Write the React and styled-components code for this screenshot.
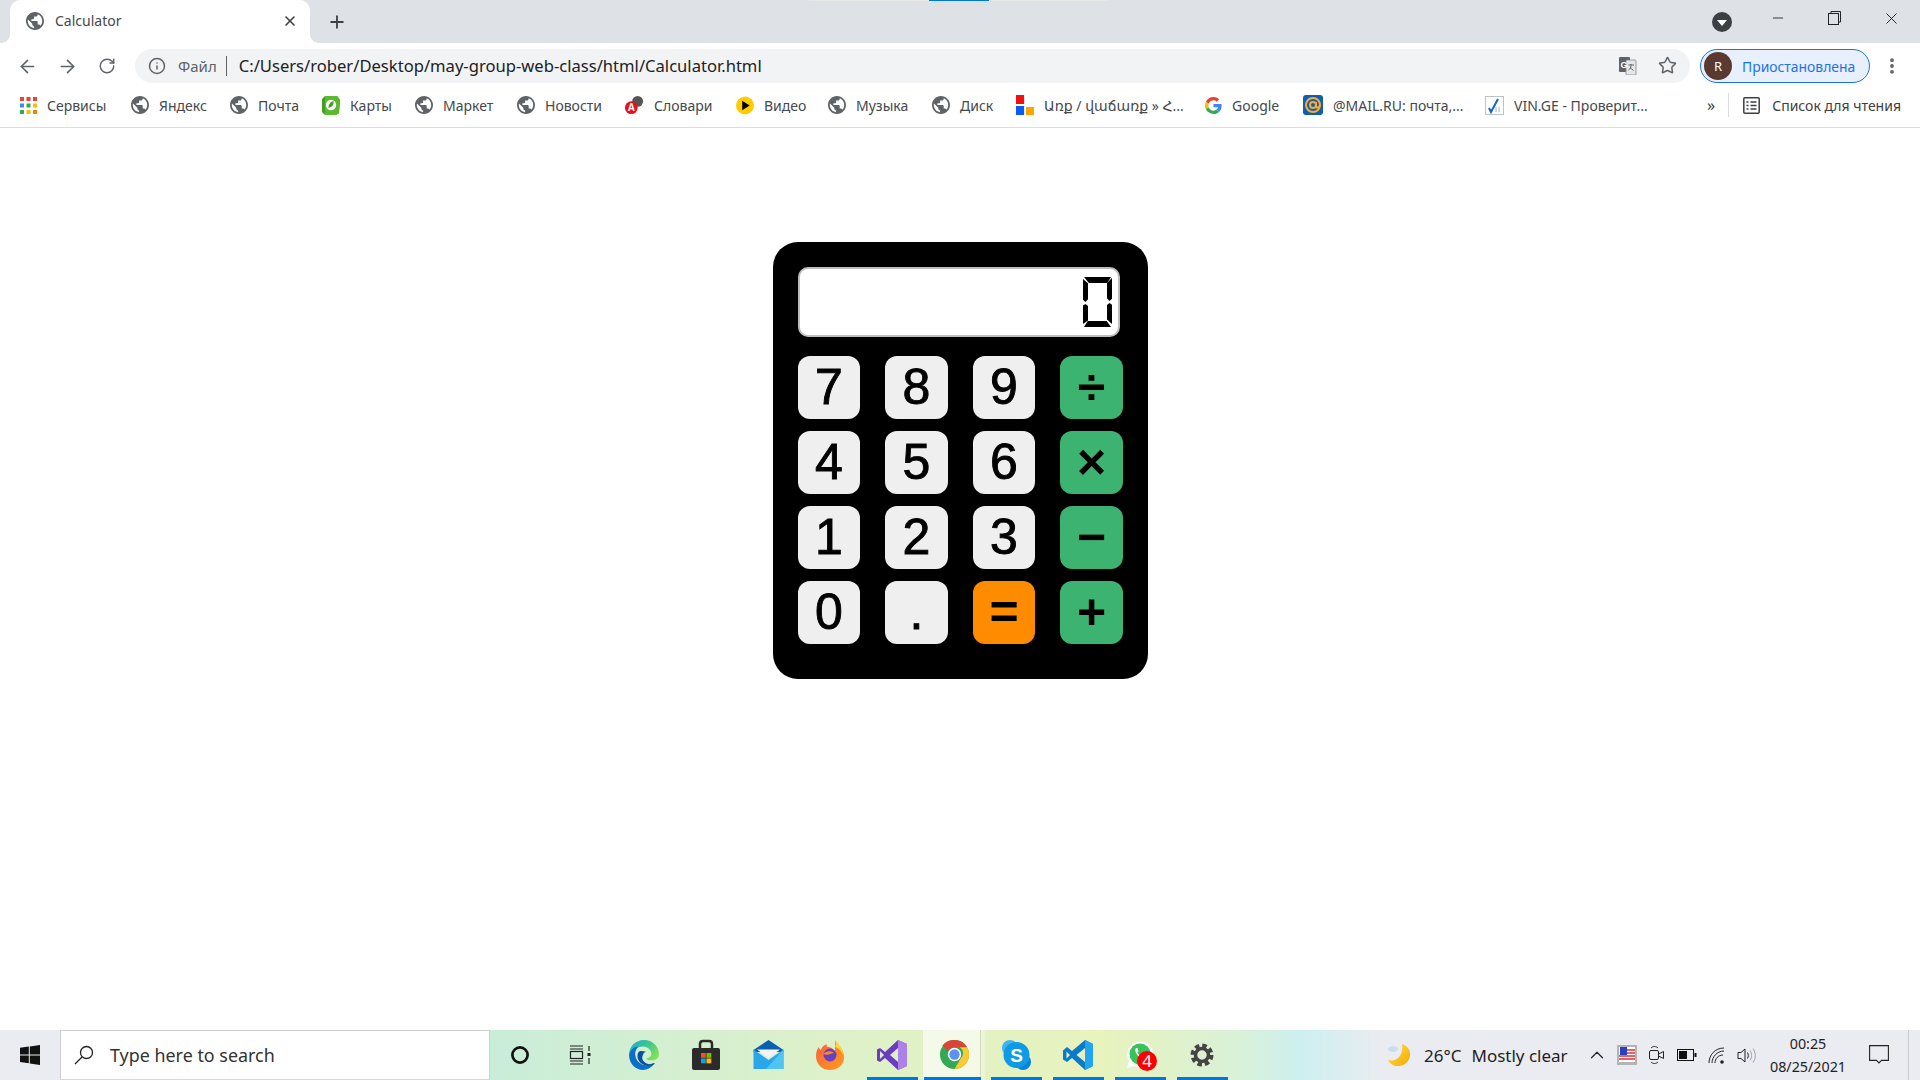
import React from "react";
import styled, { createGlobalStyle } from "styled-components";
import { ArrowLeft, ArrowRight, RotateCw, Info, Star, X, Plus, Minus, EllipsisVertical, ChevronUp } from "lucide-react";

const GlobalStyle = createGlobalStyle`
  html, body { margin: 0; height: 100%; background: #fff; overflow: hidden; }
  #root { height: 100%; }
  * { box-sizing: border-box; }
`;

const uiFont = `"Noto Sans", "DejaVu Sans", sans-serif`;

const Page = styled.div`
  height: 100vh;
  display: flex;
  flex-direction: column;
  font-family: ${uiFont};
`;

/* ---------- browser chrome ---------- */
const TabStrip = styled.div`
  position: relative;
  height: 43px;
  flex: none;
  background: #dee1e6;
  display: flex;
  padding-left: 10px;
`;
const TopIndicator = styled.div`
  position: absolute;
  top: 0;
  left: 809px;
  width: 300px;
  height: 1px;
  background: linear-gradient(90deg, #e6e6e6 0, #e6e6e6 120px, #0078d7 120px, #0078d7 180px, #e6e6e6 180px);
`;
const Tab = styled.div`
  position: relative;
  width: 300px;
  height: 43px;
  background: #fff;
  border-radius: 10px 10px 0 0;
  display: flex;
  align-items: center;
  padding: 0 0 1px 16px;
  &::before, &::after {
    content: "";
    position: absolute;
    bottom: 0;
    width: 10px;
    height: 10px;
  }
  &::before { left: -10px; background: radial-gradient(circle at 0 0, #dee1e6 10px, #fff 10.5px); }
  &::after { right: -10px; background: radial-gradient(circle at 100% 0, #dee1e6 10px, #fff 10.5px); }
`;
const TabTitle = styled.span`
  margin: -2px 0 0 11px;
  font-size: 14px;
  color: #45484d;
  flex: 1;
`;
const TabClose = styled.span`
  display: flex;
  margin-right: 12px;
  color: #3c4043;
`;
const NewTab = styled.span`
  display: flex;
  margin-left: 17px;
  align-self: center;
  color: #3c4043;
`;
const WindowControls = styled.div`
  margin-left: auto;
  display: flex;
  align-items: flex-start;
`;
const TabSearch = styled.div`
  width: 20px;
  height: 20px;
  margin: 12px 17px 0 0;
  border-radius: 50%;
  background: #3c4043;
  display: flex;
  align-items: center;
  justify-content: center;
  &::before {
    content: "";
    border-left: 5px solid transparent;
    border-right: 5px solid transparent;
    border-top: 6px solid #fff;
    margin-top: 2px;
  }
`;
const WinButton = styled.div`
  width: 57px;
  height: 36px;
  display: flex;
  align-items: center;
  justify-content: center;
  color: #222;
`;

const Toolbar = styled.div`
  height: 41px;
  flex: none;
  background: #fff;
  display: flex;
  align-items: flex-start;
  padding: 6px 0 0 7px;
`;
const NavButton = styled.div`
  width: 40px;
  height: 34px;
  display: flex;
  align-items: center;
  justify-content: center;
  color: #5f6368;
`;
const AddressBar = styled.div`
  margin-left: 8px;
  width: 1555px;
  height: 34px;
  border-radius: 17px;
  background: #f1f3f4;
  display: flex;
  align-items: center;
  padding: 0 0 1px 13px;
`;
const SiteLabel = styled.span`
  margin-left: 12px;
  font-size: 15px;
  color: #5f6368;
`;
const Divider = styled.span`
  width: 1px;
  height: 20px;
  background: #5f6368;
  margin: 0 12px 0 9px;
`;
const Url = styled.span`
  font-size: 16.6px;
  color: #202124;
  flex: 1;
`;
const AddressIcon = styled.span`
  display: flex;
  margin-right: ${(p) => p.$mr}px;
  color: #5f6368;
`;
const ProfilePill = styled.div`
  margin-left: 10px;
  width: 170px;
  height: 34px;
  border-radius: 17px;
  border: 1.5px solid #1a73e8;
  background: #e8f0fe;
  display: flex;
  align-items: center;
  padding-left: 3px;
`;
const Avatar = styled.span`
  width: 28px;
  height: 28px;
  border-radius: 50%;
  background: #5a3a30;
  color: #fff;
  font-size: 13px;
  display: flex;
  align-items: center;
  justify-content: center;
`;
const ProfileName = styled.span`
  margin-left: 10px;
  font-size: 13.9px;
  color: #1a73e8;
`;
const Kebab = styled.span`
  display: flex;
  margin: 7px 0 0 12px;
  color: #5f6368;
`;

const BookmarksBar = styled.div`
  height: 44px;
  flex: none;
  background: #fff;
  border-bottom: 1px solid #dadce0;
  display: flex;
  align-items: center;
  padding: 0 0 1px 20px;
`;
const Bookmark = styled.div`
  width: ${(p) => p.$w}px;
  display: flex;
  align-items: center;
  gap: 10px;
  font-size: 14px;
  color: #45484d;
  white-space: nowrap;
  flex: none;
`;
const BookmarksEnd = styled.div`
  margin-left: auto;
  display: flex;
  align-items: center;
  padding-right: 19px;
  font-size: 14px;
  color: #3c4043;
`;
const More = styled.span`
  font-size: 16px;
  margin-right: 13px;
`;
const BarSeparator = styled.span`
  width: 1px;
  height: 24px;
  background: #dadce0;
  margin-right: 14px;
`;
const ListLabel = styled.span`
  margin-left: 12px;
`;

/* ---------- calculator ---------- */
const Main = styled.main`
  flex: 1;
  background: #fff;
  display: flex;
  justify-content: center;
  align-items: flex-start;
  padding: 114px 0 0 1px;
`;
const Calculator = styled.div`
  width: 375px;
  height: 437px;
  background: #000;
  border-radius: 25px;
  padding: 25px;
`;
const Display = styled.div`
  width: 322px;
  height: 70px;
  background: #fff;
  border: 2px solid #bdbdbd;
  border-radius: 10px;
  display: flex;
  justify-content: flex-end;
  padding: 8px 6px 0 0;
  margin-bottom: 19px;
`;
const Readout = styled.div`
  position: relative;
  width: 29px;
  height: 50px;
  color: transparent;
  font: 44px/50px "Liberation Mono", monospace;
  overflow: hidden;
`;
const Segment = styled.i`
  position: absolute;
  left: ${(p) => p.$x}px;
  top: ${(p) => p.$y}px;
  width: ${(p) => p.$w}px;
  height: ${(p) => p.$h}px;
  background: #000;
  clip-path: ${(p) => p.$clip};
`;
const Keys = styled.div`
  display: grid;
  grid-template-columns: 62px 63px 62px 63px;
  grid-auto-rows: 63px;
  column-gap: 25px;
  row-gap: 12px;
`;
const keyColors = { digit: "#efefef", op: "#3cb371", equal: "#ff8c00" };
const Key = styled.button`
  border: 0;
  padding: 0 0 2px;
  border-radius: 12px;
  background: ${(p) => keyColors[p.$kind]};
  color: #000;
  font-family: "Liberation Sans", Arial, sans-serif;
  font-size: 50px;
  line-height: 1;
  font-weight: ${(p) => (p.$kind === "digit" ? 400 : 700)};
  -webkit-text-stroke: ${(p) => (p.$kind === "digit" ? "0.9px #000" : "0")};
  display: flex;
  align-items: center;
  justify-content: center;
`;

/* ---------- taskbar ---------- */
const Taskbar = styled.footer`
  height: 50px;
  flex: none;
  display: flex;
  background: linear-gradient(90deg, #ebecf1 0, #ebecf1 489px, #c9edd9 489px, #dcf0cb 800px, #e8f3bd 1100px, #d8f1d8 1240px, #cdeff0 1300px, #ebecf1 1385px);
`;
const StartButton = styled.div`
  width: 60px;
  display: flex;
  align-items: center;
  justify-content: center;
`;
const SearchBox = styled.div`
  width: 430px;
  background: #fff;
  border: 1px solid #cfcfcf;
  border-bottom-color: #d8d8d8;
  display: flex;
  align-items: center;
  padding-left: 13px;
  gap: 16px;
  font-size: 17.9px;
  color: #333;
`;
const ShellButton = styled.div`
  width: 60px;
  display: flex;
  align-items: center;
  justify-content: center;
`;
const AppStrip = styled.div`
  display: flex;
  margin-left: 3px;
`;
const AppButton = styled.div`
  position: relative;
  width: 62px;
  display: flex;
  align-items: center;
  justify-content: center;
  padding-bottom: 1px;
  background: ${(p) =>
    p.$active
      ? "linear-gradient(90deg, rgba(255,255,255,.62) 0, rgba(255,255,255,.62) 57px, #cfdcbc 57px, #cfdcbc 58px, rgba(255,255,255,.35) 58px)"
      : "transparent"};
  &::after {
    content: "";
    display: ${(p) => (p.$running ? "block" : "none")};
    position: absolute;
    bottom: 0;
    left: ${(p) => (p.$active ? 1 : 6)}px;
    right: ${(p) => (p.$active ? 4 : 5)}px;
    height: 3px;
    background: #0078d7;
  }
`;
const Badge = styled.span`
  position: absolute;
  left: 28px;
  top: 21px;
  width: 20px;
  height: 20px;
  border-radius: 50%;
  background: #f00;
  color: #fff;
  font-size: 17px;
  line-height: 20px;
  text-align: center;
`;
const Tray = styled.div`
  margin-left: auto;
  display: flex;
  align-items: stretch;
  color: #1f1f1f;
`;
const Weather = styled.div`
  width: 195px;
  display: flex;
  align-items: center;
  font-size: 17px;
`;
const Temp = styled.span`
  margin: 0 10px 0 13px;
`;
const TrayCell = styled.div`
  width: 30px;
  display: flex;
  align-items: center;
  justify-content: center;
  color: #222;
`;
const Clock = styled.div`
  width: 90px;
  padding-left: 2px;
  display: flex;
  flex-direction: column;
  align-items: center;
  justify-content: center;
  gap: 5px;
  font-size: 14.3px;
  line-height: 18px;
  color: #222;
`;
const NotifyCell = styled.div`
  width: 54px;
  display: flex;
  align-items: center;
  justify-content: center;
`;
const ShowDesktop = styled.div`
  width: 14px;
  position: relative;
  &::before {
    content: "";
    position: absolute;
    left: 2px;
    top: 0;
    bottom: 0;
    width: 1px;
    background: #c9cacd;
  }
`;

/* ---------- drawings ---------- */
const Globe = ({ size = 18 }) => (
  <svg width={size} height={size} viewBox="2 2 20 20" fill="#5f6368">
    <path d="M12 2C6.48 2 2 6.48 2 12s4.48 10 10 10 10-4.48 10-10S17.52 2 12 2zm-1 17.93c-3.95-.49-7-3.85-7-7.93 0-.62.08-1.21.21-1.79L9 15v1c0 1.1.9 2 2 2v1.93zm6.9-2.54c-.26-.81-1-1.39-1.9-1.39h-1v-3c0-.55-.45-1-1-1H8v-2h2c.55 0 1-.45 1-1V7h2c1.1 0 2-.9 2-2v-.41c2.93 1.19 5 4.06 5 7.41 0 2.08-.8 3.97-2.1 5.39z" />
  </svg>
);
const AppsIcon = () => {
  const colors = ["#ea4335", "#ea4335", "#ea4335", "#4285f4", "#34a853", "#fbbc04", "#34a853", "#fbbc04", "#ea8600"];
  return (
    <svg width="17" height="17" viewBox="0 0 17 17">
      {colors.map((c, i) => (
        <rect key={i} x={(i % 3) * 6.5} y={Math.floor(i / 3) * 6.5} width="4" height="4" fill={c} />
      ))}
    </svg>
  );
};
const MapsIcon = () => (
  <svg width="18" height="20" viewBox="0 0 18 20">
    <path d="M3 1h12l3 4-1 13-3 2H3l-3-3V4z" fill="#43a01f" />
    <path d="M3 1h12l3 4-1 13-3 2H3z" fill="#5cb82c" />
    <circle cx="9" cy="10" r="5.2" fill="#fff" />
    <path d="M6.5 13c0-4 2-6 5-7 .4 3.5-1 6-4 6.4z" fill="#43a01f" />
  </svg>
);
const DictIcon = () => (
  <svg width="20" height="20" viewBox="0 0 22 22">
    <circle cx="15" cy="7" r="6" fill="#555" />
    <circle cx="8" cy="14" r="7" fill="#e8101c" />
    <text x="8" y="18" fontSize="11" fontWeight="700" fontFamily="Liberation Sans" fill="#fff" textAnchor="middle">A</text>
  </svg>
);
const VideoIcon = () => (
  <svg width="18" height="19" viewBox="0 0 19 19">
    <circle cx="9.5" cy="9.5" r="9.5" fill="#ffcc00" />
    <path d="M6.5 4.5l8 5-8 5z" fill="#000" />
  </svg>
);
const ExchangeIcon = () => (
  <svg width="18" height="20" viewBox="0 0 20 20" preserveAspectRatio="none">
    <rect width="9" height="9" fill="#f01010" />
    <rect y="11" width="9" height="9" fill="#0a5cf5" />
    <rect x="11" y="12" width="9" height="8" fill="#ffa500" />
  </svg>
);
const GoogleIcon = () => (
  <svg width="17" height="17" viewBox="0 0 48 48">
    <path fill="#ea4335" d="M24 9.5c3.5 0 6.6 1.2 9.1 3.6l6.8-6.8C35.8 2.5 30.4 0 24 0 14.6 0 6.5 5.4 2.6 13.2l7.9 6.2C12.4 13.7 17.7 9.5 24 9.5z" />
    <path fill="#4285f4" d="M46.9 24.5c0-1.6-.1-3.1-.4-4.5H24v9h12.9c-.6 3-2.2 5.5-4.7 7.2l7.7 6c4.4-4.1 7-10.2 7-17.7z" />
    <path fill="#fbbc05" d="M10.5 28.6c-.5-1.4-.8-3-.8-4.6s.3-3.2.8-4.6l-7.9-6.2C.9 16.5 0 20.1 0 24s.9 7.5 2.6 10.8z" />
    <path fill="#34a853" d="M24 48c6.5 0 11.9-2.1 15.9-5.8l-7.7-6c-2.1 1.4-4.9 2.3-8.2 2.3-6.3 0-11.6-4.2-13.5-9.9l-7.9 6.2C6.5 42.6 14.6 48 24 48z" />
  </svg>
);
const MailRuIcon = () => (
  <svg width="20" height="20" viewBox="0 0 20 20">
    <rect width="20" height="20" rx="3" fill="#0b5fb4" />
    <circle cx="10" cy="10" r="7" fill="none" stroke="#ffa930" strokeWidth="2" />
    <circle cx="10" cy="10" r="3" fill="none" stroke="#ffa930" strokeWidth="2" />
    <path d="M13 7v4c0 2 3 2 4-.5" fill="none" stroke="#ffa930" strokeWidth="2" />
  </svg>
);
const VinIcon = () => (
  <svg width="19" height="19" viewBox="0 0 19 19">
    <rect x=".5" y=".5" width="18" height="18" fill="#fff" stroke="#b8c4d0" />
    <path d="M4 12l2 4 7-13" fill="none" stroke="#1565c0" strokeWidth="2" />
    <path d="M11 11v5M14 11v5" stroke="#a0b0c0" />
  </svg>
);
const TranslateIcon = () => (
  <svg width="18" height="18" viewBox="0 0 18 18">
    <rect x="0" y="0" width="11" height="15" rx="1" fill="#5f6368" />
    <rect x="7" y="3" width="10" height="15" rx="1" fill="#e4e6e8" stroke="#80868b" strokeWidth=".8" />
    <text x="5" y="11" fontSize="9" fontWeight="700" fontFamily="Liberation Sans" fill="#fff" textAnchor="middle">G</text>
    <path d="M9.5 8h5.5M12 7v1.5c0 2-1 3.5-2.5 4.5M11 10.5l3.5 3" fill="none" stroke="#5f6368" />
  </svg>
);
const ReadingIcon = () => (
  <svg width="17" height="17" viewBox="0 0 17 17" fill="none" stroke="#3c4043" strokeWidth="1.5">
    <rect x=".8" y=".8" width="15.4" height="15.4" rx="1" />
    <path d="M3.5 5h2M7.5 5h6M3.5 8.5h2M7.5 8.5h6M3.5 12h2M7.5 12h6" />
  </svg>
);
const RestoreIcon = () => (
  <svg width="13" height="14" viewBox="0 0 13 14" fill="none" stroke="#222">
    <rect x=".5" y="2.5" width="10" height="11" />
    <path d="M3 2.5V.5h9.5v10.5h-2" />
  </svg>
);
const WindowsIcon = () => (
  <svg width="20" height="20" viewBox="0 0 20 20" fill="#111">
    <path d="M0 2.8l8.8-1.2v7.8H0zM9.8 1.4L20 0v9.4H9.8zM0 10.4h8.8v7.9L0 17.1zM9.8 10.4H20V20L9.8 18.5z" />
  </svg>
);
const SearchIcon = () => (
  <svg width="20" height="20" viewBox="0 0 20 20" fill="none" stroke="#222" strokeWidth="1.3">
    <circle cx="12.5" cy="7.5" r="6" />
    <path d="M8 12L1 19" />
  </svg>
);
const CortanaIcon = () => (
  <svg width="20" height="20" viewBox="0 0 20 20">
    <circle cx="10" cy="10" r="7.6" fill="none" stroke="#111" strokeWidth="2.7" />
  </svg>
);
const TaskViewIcon = () => (
  <svg width="24" height="24" viewBox="0 0 24 24" fill="none" stroke="#222" strokeWidth="1.2">
    <path d="M2 3h13M2 6h13M2 18h13M2 21h13" />
    <rect x="2.5" y="8.5" width="12" height="7" />
    <path d="M21 3v5M21 15v6" />
    <rect x="19.5" y="10" width="3" height="3" fill="#222" stroke="none" />
  </svg>
);
const EdgeIcon = () => (
  <svg width="32" height="32" viewBox="0 0 30 30">
    <defs>
      <linearGradient id="edgeTop" x1="0" y1="0" x2="1" y2=".6">
        <stop offset="0" stopColor="#1aa6d8" />
        <stop offset=".6" stopColor="#3fc98a" />
        <stop offset="1" stopColor="#7fe05a" />
      </linearGradient>
    </defs>
    <path d="M1 15C1 7 7 1 15 1s14 6 14 13c0 4-3 6-7 6-3 0-5-1-5-2 3 0 5-2 5-4 0-4-4-7-8-7C8 7 4 11 1 15z" fill="url(#edgeTop)" />
    <path d="M1 15c1-5 5-8 9-8-2 2-4 5-3 9 1 6 7 10 13 8 3-1 4-2 5-1-3 4-7 6-11 6C7 29 1 23 1 15z" fill="#0c6fc7" />
    <path d="M10 12c-3 5 0 12 8 13 3 0 5 0 7-2-3 1-7 1-9-1-3-2-3-5-2-7 1-3 3-3 3-3-3-1-6-1-7 0z" fill="#0a4fa0" />
  </svg>
);
const StoreIcon = () => (
  <svg width="30" height="32" viewBox="0 0 30 32">
    <path d="M9 10V5c0-2 1-3 3-3h6c2 0 3 1 3 3v5" fill="none" stroke="#2b2b2b" strokeWidth="2.5" />
    <rect x="1" y="9" width="28" height="22" rx="2" fill="#2b2b2b" />
    <rect x="10" y="14" width="4.8" height="4.8" fill="#f25022" />
    <rect x="15.5" y="14" width="4.8" height="4.8" fill="#7fba00" />
    <rect x="10" y="19.5" width="4.8" height="4.8" fill="#00a4ef" />
    <rect x="15.5" y="19.5" width="4.8" height="4.8" fill="#ffb900" />
  </svg>
);
const MailIcon = () => (
  <svg width="31" height="29" viewBox="0 0 31 29">
    <path d="M.5 10L15.5 0 30.5 10v2H.5z" fill="#0a5fb0" />
    <path d="M4 9.5h23L15.5 18z" fill="#f4f4f4" />
    <path d="M.5 9.500l15 10.500 15-10.500V29H.5z" fill="#28a8ea" />
    <path d="M30.5 9.500V29H13z" fill="#50c4f4" />
  </svg>
);
const FirefoxIcon = () => (
  <svg width="30" height="32" viewBox="0 0 30 32">
    <defs>
      <linearGradient id="foxBody" x1="0" y1="0" x2="1" y2="1">
        <stop offset="0" stopColor="#ff5a3c" />
        <stop offset="1" stopColor="#ff9f1c" />
      </linearGradient>
    </defs>
    <path d="M20 1c1 4 9 8 9 17 0 8-6 13-14 13S1 25 1 17c0-4 1-7 3-9 0 2 1 3 2 3 1-4 4-5 6-6-1 2 0 3 1 3 3 0 7 2 7 8z" fill="url(#foxBody)" />
    <path d="M20 1c4 4 8 9 8 15-2-5-5-7-8-8 1-2 1-5 0-7z" fill="#ffd43a" />
    <circle cx="15" cy="16" r="6.5" fill="#6b3fc4" />
    <path d="M8 15c3-3 8-4 11-1-2 0-3 1-4 1-2 1-4 1-7 0z" fill="#ff8a1c" />
  </svg>
);
const VisualStudioIcon = () => (
  <svg width="30" height="32" viewBox="0 0 30 32">
    <path d="M21 1l9 4v22l-9 4L8 19l-5 4-3-1.5v-11L3 9l5 4z" fill="#6a3cc0" />
    <path d="M21 1l9 4v22l-9 4z" fill="#ad82e8" />
    <path d="M3 12v8l4-4zM21 9l-8 7 8 7z" fill="#dcf0cb" />
  </svg>
);
const ChromeIcon = () => (
  <svg width="29" height="29" viewBox="0 0 48 48">
    <circle cx="24" cy="24" r="24" fill="#34a853" />
    <path d="M24 0a24 24 0 0 1 20.8 12H24a12 12 0 0 0-11 7L4 9A24 24 0 0 1 24 0z" fill="#db4437" />
    <path d="M44.8 12A24 24 0 0 1 24 48l10-17a12 12 0 0 0-1-19z" fill="#fcc934" />
    <circle cx="24" cy="24" r="11" fill="#fff" />
    <circle cx="24" cy="24" r="8.5" fill="#5f8ff0" />
  </svg>
);
const SkypeIcon = () => (
  <svg width="29" height="30" viewBox="0 0 29 30">
    <circle cx="8" cy="8" r="8" fill="#3fb4ee" />
    <circle cx="21" cy="22" r="8" fill="#0a84d6" />
    <circle cx="14.5" cy="15" r="13" fill="#0f9ae6" />
    <text x="14.5" y="21.5" fontSize="19" fontWeight="700" fontFamily="Liberation Sans" fill="#fff" textAnchor="middle">S</text>
  </svg>
);
const CodeIcon = () => (
  <svg width="30" height="32" viewBox="0 0 30 32">
    <path d="M22 1l8 4v22l-8 4-13-12-5 4-4-2.5v-9L4 8l5 4z" fill="#0a7acb" />
    <path d="M22 1l8 4v22l-8 4z" fill="#24a3ee" />
    <path d="M3.5 12.5v7l3.5-3.5zM22 9l-8.5 7 8.5 7z" fill="#e5f2c0" />
  </svg>
);
const WhatsAppIcon = () => (
  <svg width="32" height="32" viewBox="0 0 32 32">
    <path d="M3 29l2-7A13 13 0 1 1 10 27z" fill="#fff" />
    <circle cx="16" cy="15" r="10.5" fill="#36c35a" />
    <path d="M12 9c-1 1-1 3 0 5 1.5 3 4 5 6 5 1 0 2-1 2-2l-2-1-1 1c-2-1-3-2-3.5-4l1-1-1-3z" fill="#fff" />
  </svg>
);
const GearIcon = () => (
  <svg width="24" height="24" viewBox="0 0 24 24" fill="none" stroke="#444">
    <circle cx="12" cy="12" r="9.5" strokeWidth="4" strokeDasharray="4.5 2.96" />
    <circle cx="12" cy="12" r="6.5" strokeWidth="3.5" />
  </svg>
);
const MoonIcon = () => (
  <svg width="24" height="24" viewBox="0 0 24 24">
    <defs>
      <linearGradient id="moon" x1="0" y1="0" x2="1" y2="1">
        <stop offset="0" stopColor="#ffe24d" />
        <stop offset="1" stopColor="#f5a800" />
      </linearGradient>
    </defs>
    <path d="M15 1c6 2 9 7 8 12-1 6-6 10-12 10-4 0-8-2-10-6 7 2 16-3 14-16z" fill="url(#moon)" />
    <ellipse cx="6" cy="6" rx="5" ry="3" fill="#c8dff2" />
  </svg>
);
const FlagIcon = () => (
  <svg width="20" height="20" viewBox="0 0 20 20">
    <rect width="20" height="20" fill="#b4b4b4" />
    <rect x="2" y="2" width="16" height="15" fill="#fff" />
    <path d="M8 5h10M8 8h10M2 11h16M2 14h16" stroke="#e03030" strokeWidth="1.6" />
    <rect x="3" y="2" width="7" height="8" fill="#2b3fc8" />
  </svg>
);
const MeetIcon = () => (
  <svg width="16" height="20" viewBox="0 0 16 20" fill="none" stroke="#222">
    <rect x=".5" y="5.5" width="9" height="9" rx="1.5" />
    <path d="M9.5 9l5-2.5v7l-5-2.5M2 3c2-2 5-2 7 0M2 17c2 2 5 2 7 0" />
  </svg>
);
const BatteryIcon = () => (
  <svg width="20" height="12" viewBox="0 0 20 12">
    <rect x=".5" y=".5" width="16" height="11" fill="none" stroke="#111" />
    <rect x="2" y="2" width="8" height="8" fill="#111" />
    <rect x="17.5" y="4" width="2" height="4" fill="#111" />
  </svg>
);
const WifiIcon = () => (
  <svg width="18" height="17" viewBox="0 0 18 17" fill="none" stroke="#222">
    <path d="M1 16C1 8 7 1 16 1M4 16C4 10 9 4 16 4M7 16c0-4 3-8 8-8" />
    <circle cx="14" cy="15" r="1.8" fill="#222" stroke="none" />
  </svg>
);
const SpeakerIcon = () => (
  <svg width="20" height="17" viewBox="0 0 20 17" fill="none" stroke="#222">
    <path d="M1 5.5h3L8 2v13L4 11.5H1z" />
    <path d="M10.5 5.5c1 2 1 4 0 6" />
    <path d="M13 3.5c2 3 2 7 0 10M16 1.5c3 4 3 10 0 14" stroke="#a0a0a0" />
  </svg>
);
const NotifyIcon = () => (
  <svg width="20" height="20" viewBox="0 0 20 20" fill="none" stroke="#222" strokeWidth="1.1">
    <path d="M.6.6h18.8v14.8H12.5L10 18l-2.5-2.6H.6z" />
  </svg>
);

/* ---------- data ---------- */
const bookmarks = [
  { label: "Сервисы", w: 111, icon: <AppsIcon /> },
  { label: "Яндекс", w: 99, icon: <Globe /> },
  { label: "Почта", w: 92, icon: <Globe /> },
  { label: "Карты", w: 93, icon: <MapsIcon /> },
  { label: "Маркет", w: 102, icon: <Globe /> },
  { label: "Новости", w: 107, icon: <Globe /> },
  { label: "Словари", w: 112, icon: <DictIcon /> },
  { label: "Видео", w: 92, icon: <VideoIcon /> },
  { label: "Музыка", w: 104, icon: <Globe /> },
  { label: "Диск", w: 84, icon: <Globe /> },
  { label: "Առք / վաճառք » Հ...", w: 189, icon: <ExchangeIcon /> },
  { label: "Google", w: 98, icon: <GoogleIcon /> },
  { label: "@MAIL.RU: почта,...", w: 182, icon: <MailRuIcon /> },
  { label: "VIN.GE - Проверит...", w: 170, icon: <VinIcon /> },
];

const keys = [
  ["7", "digit"], ["8", "digit"], ["9", "digit"], ["÷", "op"],
  ["4", "digit"], ["5", "digit"], ["6", "digit"], ["×", "op"],
  ["1", "digit"], ["2", "digit"], ["3", "digit"], ["−", "op"],
  ["0", "digit"], [".", "digit"], ["=", "equal"], ["+", "op"],
];

// lit segments of a seven-segment "0"; the middle bar stays off
const segments = [
  { x: 1, y: 0, w: 27, h: 6, clip: "polygon(0 0, 100% 0, 86% 100%, 18% 100%)" },
  { x: 24, y: 1, w: 5, h: 23, clip: "polygon(100% 0, 100% 90%, 50% 100%, 0 88%, 0 22%)" },
  { x: 24, y: 26, w: 5, h: 21, clip: "polygon(50% 0, 100% 8%, 100% 100%, 0 78%, 0 10%)" },
  { x: 1, y: 44, w: 27, h: 6, clip: "polygon(14% 0, 84% 0, 100% 100%, 0 100%)" },
  { x: 0, y: 27, w: 5, h: 20, clip: "polygon(50% 0, 100% 10%, 100% 82%, 0 100%, 0 8%)" },
  { x: 0, y: 2, w: 5, h: 23, clip: "polygon(0 0, 100% 18%, 100% 88%, 50% 100%, 0 90%)" },
];

const apps = [
  { icon: <EdgeIcon /> },
  { icon: <StoreIcon /> },
  { icon: <MailIcon /> },
  { icon: <FirefoxIcon /> },
  { icon: <VisualStudioIcon />, running: true },
  { icon: <ChromeIcon />, running: true, active: true },
  { icon: <SkypeIcon />, running: true },
  { icon: <CodeIcon />, running: true },
  { icon: <WhatsAppIcon />, running: true, badge: "4" },
  { icon: <GearIcon />, running: true },
];

const App = () => (
  <Page>
    <GlobalStyle />
    <TabStrip>
      <TopIndicator />
      <Tab>
        <Globe />
        <TabTitle>Calculator</TabTitle>
        <TabClose><X size={16} strokeWidth={2.4} /></TabClose>
      </Tab>
      <NewTab><Plus size={20} strokeWidth={2.2} /></NewTab>
      <WindowControls>
        <TabSearch />
        <WinButton><Minus size={16} strokeWidth={1.3} /></WinButton>
        <WinButton><RestoreIcon /></WinButton>
        <WinButton><X size={19} strokeWidth={1.2} /></WinButton>
      </WindowControls>
    </TabStrip>

    <Toolbar>
      <NavButton><ArrowLeft size={21} strokeWidth={1.8} /></NavButton>
      <NavButton><ArrowRight size={21} strokeWidth={1.8} /></NavButton>
      <NavButton><RotateCw size={18} strokeWidth={1.9} /></NavButton>
      <AddressBar>
        <AddressIcon $mr={0}><Info size={18} strokeWidth={2} /></AddressIcon>
        <SiteLabel>Файл</SiteLabel>
        <Divider />
        <Url>C:/Users/rober/Desktop/may-group-web-class/html/Calculator.html</Url>
        <AddressIcon $mr={21}><TranslateIcon /></AddressIcon>
        <AddressIcon $mr={13}><Star size={19} strokeWidth={1.9} /></AddressIcon>
      </AddressBar>
      <ProfilePill>
        <Avatar>R</Avatar>
        <ProfileName>Приостановлена</ProfileName>
      </ProfilePill>
      <Kebab><EllipsisVertical size={20} strokeWidth={2.6} /></Kebab>
    </Toolbar>

    <BookmarksBar>
      {bookmarks.map((b) => (
        <Bookmark key={b.label} $w={b.w}>
          {b.icon}
          <span>{b.label}</span>
        </Bookmark>
      ))}
      <BookmarksEnd>
        <More>»</More>
        <BarSeparator />
        <ReadingIcon />
        <ListLabel>Список для чтения</ListLabel>
      </BookmarksEnd>
    </BookmarksBar>

    <Main>
      <Calculator>
        <Display>
          <Readout>
            0
            {segments.map((s, i) => (
              <Segment key={i} $x={s.x} $y={s.y} $w={s.w} $h={s.h} $clip={s.clip} />
            ))}
          </Readout>
        </Display>
        <Keys>
          {keys.map(([label, kind]) => (
            <Key key={label} $kind={kind}>{label}</Key>
          ))}
        </Keys>
      </Calculator>
    </Main>

    <Taskbar>
      <StartButton><WindowsIcon /></StartButton>
      <SearchBox>
        <SearchIcon />
        <span>Type here to search</span>
      </SearchBox>
      <ShellButton><CortanaIcon /></ShellButton>
      <ShellButton><TaskViewIcon /></ShellButton>
      <AppStrip>
        {apps.map((a, i) => (
          <AppButton key={i} $running={a.running} $active={a.active}>
            {a.icon}
            {a.badge && <Badge>{a.badge}</Badge>}
          </AppButton>
        ))}
      </AppStrip>
      <Tray>
        <Weather>
          <MoonIcon />
          <Temp>26°C</Temp>
          <span>Mostly clear</span>
        </Weather>
        <TrayCell><ChevronUp size={22} strokeWidth={1.3} /></TrayCell>
        <TrayCell><FlagIcon /></TrayCell>
        <TrayCell><MeetIcon /></TrayCell>
        <TrayCell><BatteryIcon /></TrayCell>
        <TrayCell><WifiIcon /></TrayCell>
        <TrayCell><SpeakerIcon /></TrayCell>
        <Clock>
          <span>00:25</span>
          <span>08/25/2021</span>
        </Clock>
        <NotifyCell><NotifyIcon /></NotifyCell>
        <ShowDesktop />
      </Tray>
    </Taskbar>
  </Page>
);

export default App;
